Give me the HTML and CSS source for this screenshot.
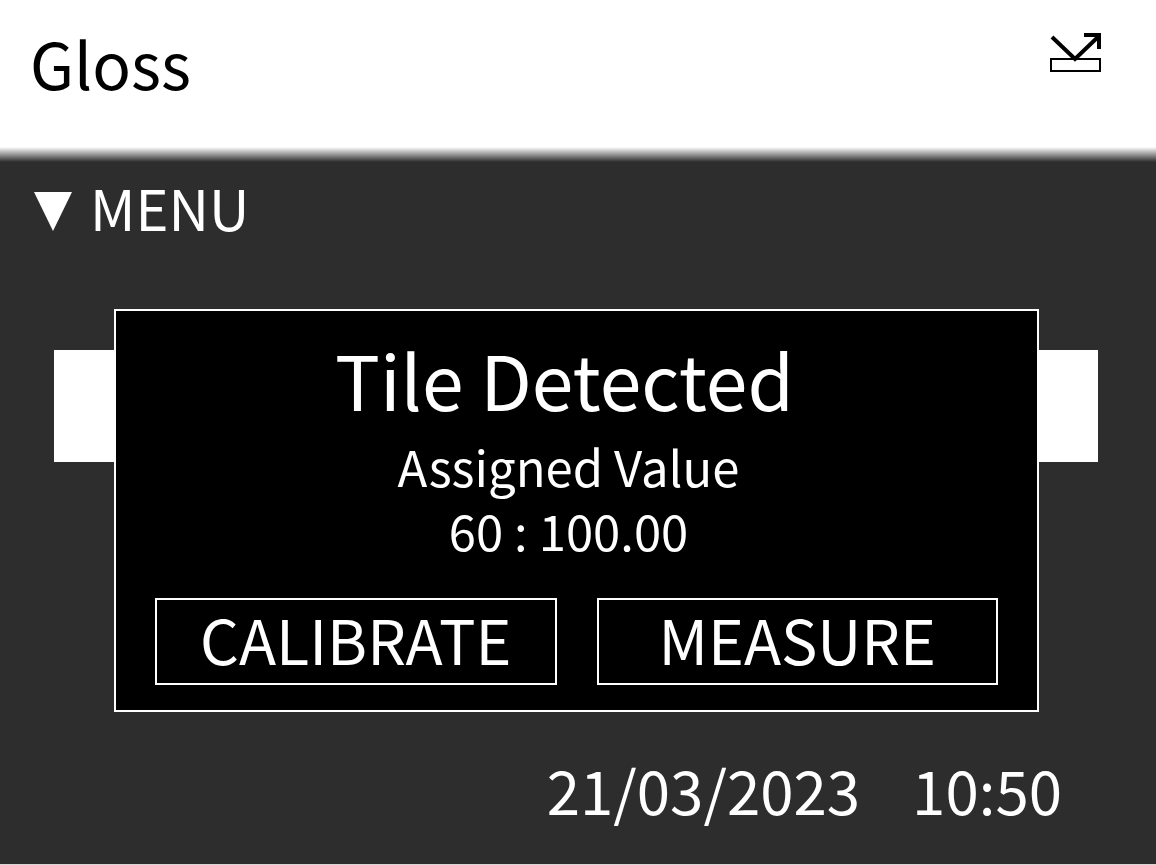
FILE: index.html
```
<!DOCTYPE html>
<html lang="en">
<head>
    <meta charset="UTF-8">
    <title>Gloss</title>
    <link rel="stylesheet" href="styles.css">
</head>
<body>
    <div class="screen">
        <header class="header">
            <h1 class="mode">Gloss</h1>
            <svg class="beam" width="54" height="42" viewBox="0 0 54 42" aria-hidden="true">
                <rect x="2" y="27" width="49" height="12" fill="none" stroke="#000" stroke-width="2"/>
                <path d="M3 5 L26 27 L50 4" fill="none" stroke="#000" stroke-width="4"/>
                <path d="M35 3 H50 V17" fill="none" stroke="#000" stroke-width="4"/>
            </svg>
        </header>

        <main class="main">
            <button class="menu" type="button">
                <svg class="menu-arrow" width="38" height="39" viewBox="0 0 38 39" aria-hidden="true">
                    <path d="M0 0 H38 L19 39 Z" fill="#fff"/>
                </svg>
                MENU
            </button>

            <div class="stage">
                <div class="result-bar"></div>
                <section class="dialog" role="dialog" aria-labelledby="dialogTitle">
                    <h2 class="dialog-title" id="dialogTitle">Tile Detected</h2>
                    <p class="dialog-text">Assigned Value</p>
                    <p class="dialog-text">60 : 100.00</p>
                    <div class="actions">
                        <button class="action" type="button">CALIBRATE</button>
                        <button class="action" type="button">MEASURE</button>
                    </div>
                </section>
            </div>

            <footer class="clock">
                <time>21/03/2023</time>
                <time>10:50</time>
            </footer>
        </main>
    </div>
</body>
</html>
```
FILE: styles.css
```
* {
    box-sizing: border-box;
}

body {
    margin: 0;
    background: #fff;
    font-family: "Noto Sans CJK SC", "Noto Sans", sans-serif;
}

h1, h2, p {
    margin: 0;
    font-weight: normal;
}

button {
    background: none;
    border: 0;
    padding: 0;
    color: inherit;
    font-family: inherit;
}

.screen {
    display: flex;
    flex-direction: column;
    min-height: 100vh;
    border-bottom: 1px solid #d8d8d6;
}

.header {
    display: flex;
    justify-content: space-between;
    align-items: flex-start;
    padding: 32px 53px 70px 30px;
    /* fades into the dark area */
    background: linear-gradient(to top, #2d2d2d, #fff 15px);
    color: #000;
}

.mode {
    font-size: 64px;
    line-height: 60px;
}

.main {
    flex: 1;
    display: flex;
    flex-direction: column;
    background: #2d2d2d;
    color: #fff;
}

.menu {
    display: flex;
    align-items: center;
    align-self: flex-start;
    gap: 18px;
    margin: 9px 34px 0;
    font-size: 56px;
    line-height: 72px;
}

.menu-arrow {
    margin-top: 8px;
}

.stage {
    display: grid;
    margin: 66px 58px 0 54px;
}

/* the dialog covers the middle of the bar */
.result-bar, .dialog {
    grid-area: 1 / 1;
}

.result-bar {
    height: 112px;
    margin-top: 41px;
    background: #fff;
}

.dialog {
    margin: 0 59px 0 60px;
    padding: 23px 39px 25px;
    border: 2px solid #fff;
    background: #000;
    text-align: center;
    z-index: 1;
}

.dialog-title {
    margin-bottom: 10px;
    padding-right: 24px;
    font-size: 75px;
    line-height: 90px;
}

.dialog-text {
    padding-right: 16px;
    font-size: 49px;
    line-height: 64px;
}

.actions {
    display: grid;
    grid-template-columns: 1fr 1fr;
    gap: 40px;
    margin-top: 36px;
}

.action {
    height: 87px;
    padding-bottom: 5px;
    border: 2px solid #fff;
    font-size: 61px;
    line-height: 78px;
}

.clock {
    display: flex;
    justify-content: flex-end;
    gap: 52px;
    margin-top: auto;
    padding: 0 94px 39px;
    font-size: 60px;
    line-height: 72px;
}
```
